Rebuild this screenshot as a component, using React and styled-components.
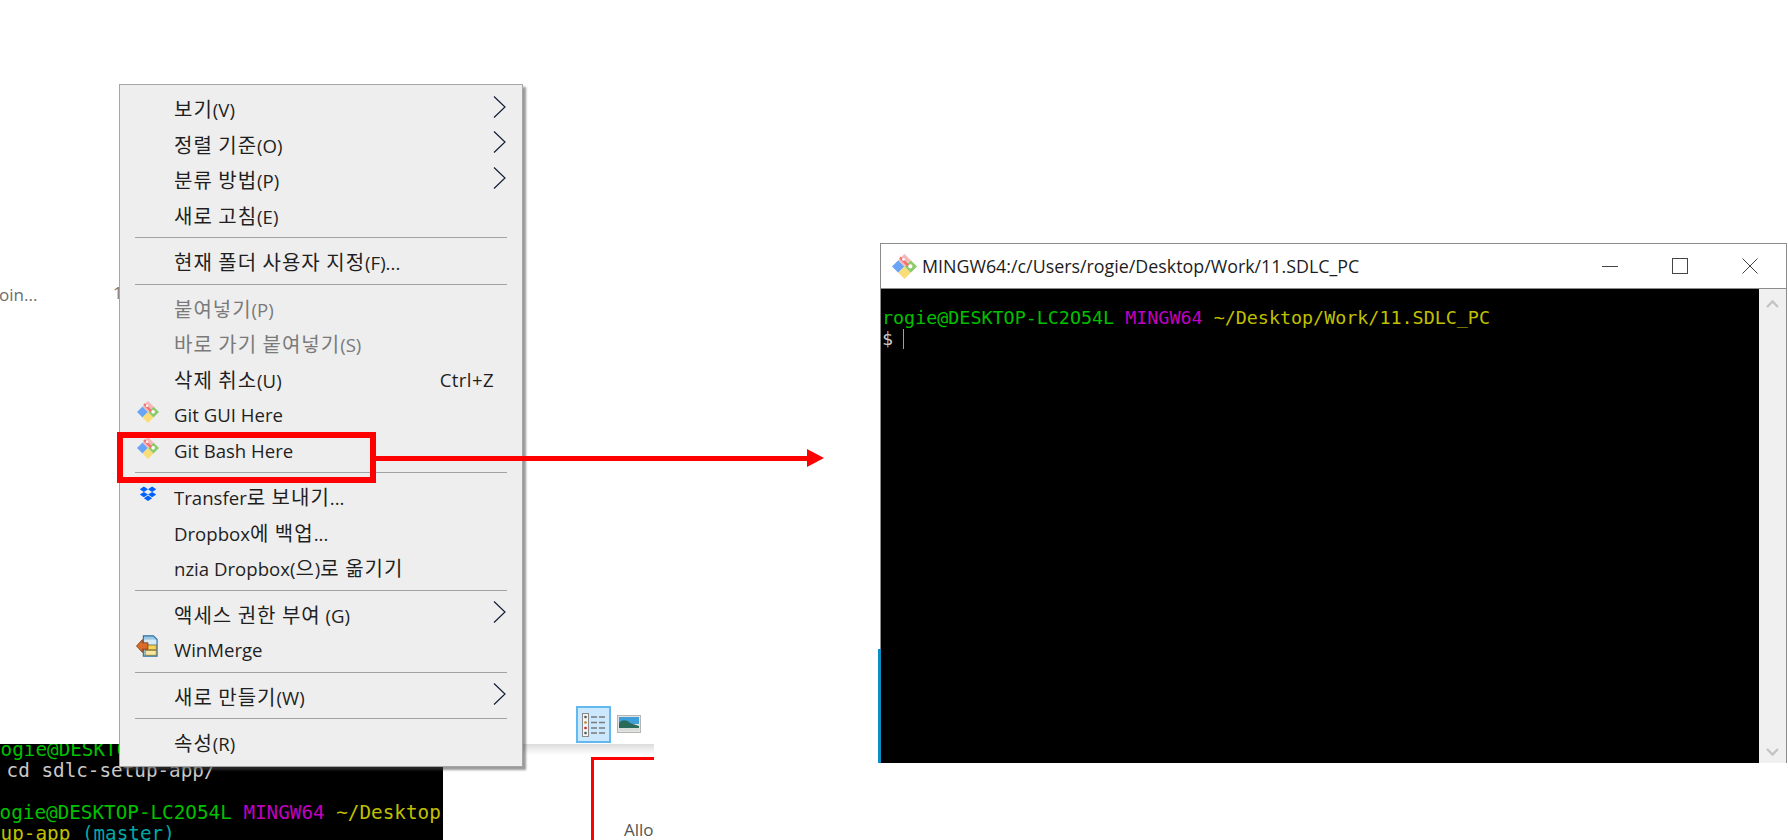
import React from "react";
import styled, { createGlobalStyle } from "styled-components";

const UI_FONT = `"Open Sans", "Noto Sans CJK KR", sans-serif`;
const MONO_FONT = `"DejaVu Sans Mono", "Liberation Mono", monospace`;

const GlobalStyle = createGlobalStyle`
  html, body {
    margin: 0;
    padding: 0;
    background: #fff;
  }
`;

const Page = styled.div`
  position: relative;
  display: flex;
  align-items: flex-start;
  width: 1788px;
  height: 840px;
  overflow: hidden;
  background: #fff;
`;

const Collage = styled.div`
  position: relative;
  width: 654px;
  height: 840px;
  flex: none;
  overflow: hidden;
  padding: 84px 0 0 119px;
  box-sizing: border-box;
  font-family: ${UI_FONT};
`;

/* pieces of other screenshots showing behind the menu */
const BehindText = styled.span`
  position: absolute;
  left: ${(p) => p.$left}px;
  top: ${(p) => p.$top}px;
  font-size: 17px;
  line-height: 24px;
  color: ${(p) => p.$color || "#6d6d6d"};
`;

const BehindTerminal = styled.div`
  position: absolute;
  left: 0;
  top: 744px;
  width: 443px;
  height: 96px;
  background: #000;
  color: #c8c8c8;
  font-family: ${MONO_FONT};
  font-size: 19.3px;
  line-height: 21px;
  white-space: pre;
  overflow: hidden;
`;

const TermLine = styled.div`
  height: 21px;
  margin-left: ${(p) => p.$shift || 0}px;
  transform: translateY(-5px);
`;

const Tone = styled.span`
  color: ${(p) => p.$c};
`;

const ShadeBand = styled.div`
  position: absolute;
  left: 443px;
  right: 0;
  top: 744px;
  height: 11px;
  background: linear-gradient(#dcdcdc, #ffffff);
`;

const ViewButton = styled.div`
  position: absolute;
  left: 576px;
  top: 706px;
  width: 35px;
  height: 37px;
  box-sizing: border-box;
  display: flex;
  align-items: center;
  justify-content: center;
  background: #cce8ff;
  border: 2px solid #62b9ee;
`;

const ViewIcon = styled.div`
  position: absolute;
  left: 617px;
  top: 715px;
  width: 24px;
  height: 18px;
`;

const PreviewBox = styled.div`
  position: absolute;
  left: 591px;
  top: 757px;
  width: 120px;
  height: 120px;
  box-sizing: border-box;
  border: 3px solid #ff0000;
  background: #fff;
  padding: 58px 0 0 30px;
  color: #555;
  font-size: 17px;
  line-height: 24px;
`;

const Menu = styled.div`
  position: relative;
  z-index: 2;
  width: 404px;
  height: 683px;
  box-sizing: border-box;
  padding-top: 6px;
  background: #eeeeee;
  border: 1px solid #a6a6a6;
  box-shadow: 3px 3px 2px rgba(70, 70, 70, 0.55);
`;

const Row = styled.div`
  position: relative;
  display: flex;
  align-items: center;
  height: 35.5px;
  padding: 0 16px 0 54px;
  font-size: 18.6px;
  color: ${(p) => (p.$disabled ? "#7a7a7a" : "#1f1f1f")};
  white-space: nowrap;
`;

const Hangul = styled.span`
  font-family: "Noto Sans CJK KR", sans-serif;
  font-size: 20px;
  letter-spacing: 1px;
`;

const Shortcut = styled.span`
  margin-left: auto;
  padding-right: 12px;
  letter-spacing: 0.4px;
`;

const Chevron = styled.svg`
  margin-left: auto;
  width: 13px;
  height: 24px;
  transform: translateY(-2px);
`;

const RowIcon = styled.svg`
  position: absolute;
  left: ${(p) => p.$left}px;
  top: ${(p) => p.$top}px;
  width: ${(p) => p.$size}px;
  height: ${(p) => p.$size}px;
`;

const Separator = styled.div`
  height: 1px;
  margin: 4px 15px 6px;
  background: #a3a3a3;
`;

const Callout = styled.div`
  position: absolute;
  z-index: 3;
  left: 117px;
  top: 432px;
  display: flex;
  align-items: center;
`;

const CalloutBox = styled.div`
  width: 259px;
  height: 51px;
  box-sizing: border-box;
  border: 6px solid #ff0000;
`;

const CalloutLine = styled.div`
  width: 431px;
  height: 5px;
  background: #ff0000;
  margin-top: 1px;
`;

const CalloutHead = styled.div`
  width: 0;
  height: 0;
  margin-top: 1px;
  border-left: 17px solid #ff0000;
  border-top: 9px solid transparent;
  border-bottom: 9px solid transparent;
`;

const Terminal = styled.div`
  position: relative;
  flex: none;
  margin: 243px 0 0 226px;
  width: 907px;
  height: 520px;
  box-sizing: border-box;
  display: flex;
  flex-direction: column;
  border: 1px solid #8c8c8c;
  border-bottom: 0;
  background: #fff;
`;

const BlueEdge = styled.div`
  position: absolute;
  left: -3px;
  bottom: 0;
  width: 3px;
  height: 114px;
  background: #0a8fc4;
`;

const TitleBar = styled.div`
  display: flex;
  align-items: center;
  height: 45px;
  flex: none;
  padding-left: 11px;
  box-sizing: border-box;
  border-bottom: 1px solid #8c8c8c;
  font-family: ${UI_FONT};
  font-size: 17.85px;
  color: #1c1c1c;
  white-space: nowrap;
`;

const TitleIcon = styled.svg`
  width: 25px;
  height: 25px;
  flex: none;
  margin-right: 5px;
`;

const WinButtons = styled.div`
  margin-left: auto;
  display: flex;
  align-items: center;
  gap: 54px;
  padding-right: 28px;
`;

const WinIcon = styled.svg`
  width: 16px;
  height: 16px;
  display: block;
`;

const TermBody = styled.div`
  flex: 1;
  display: flex;
  min-height: 0;
`;

const Screen = styled.div`
  flex: 1;
  background: #000;
  padding: 18px 0 0 1px;
  color: #c8c8c8;
  font-family: ${MONO_FONT};
  font-size: 18.37px;
  line-height: 21px;
  white-space: pre;
`;

const Prompt = styled.div`
  display: flex;
  align-items: center;
  height: 21px;
`;

const Caret = styled.span`
  display: inline-block;
  width: 1px;
  height: 20px;
  margin-left: 10px;
  background: #a0a0a0;
`;

const ScrollBar = styled.div`
  width: 27px;
  flex: none;
  display: flex;
  flex-direction: column;
  justify-content: space-between;
  align-items: center;
  padding: 10px 0 6px;
  box-sizing: border-box;
  background: #f0f0f0;
`;

const ScrollArrow = styled.svg`
  width: 13px;
  height: 10px;
  display: block;
`;

function GitLogo({ icon: Icon = RowIcon, ...props }) {
  return (
    <Icon viewBox="0 0 24 24" {...props}>
      <path d="M6 6 L12 12 L6 18 L0 12 Z" fill="#6aa5f5" />
      <path d="M12 12 L18 18 L12 24 L6 18 Z" fill="#fadc78" />
      <path d="M18 6 L24 12 L18 18 L12 12 Z" fill="#8ccb6b" />
      <path d="M12 0 L18 6 L12 12 L6 6 Z" fill="#f6b6b6" />
      <path d="M8.5 2.5 L17 11 L15.4 12.6 L6.9 4.1 Z" fill="#f26d6d" />
      <circle cx="17.6" cy="11.8" r="2" fill="#fff" />
      <circle cx="11" cy="5.2" r="1.4" fill="#fff" />
    </Icon>
  );
}

function DropboxLogo(props) {
  return (
    <RowIcon viewBox="0 0 24 24" {...props}>
      <path
        d="M6.5 2 L12 5.6 L6.5 9.2 L1 5.6 Z M17.5 2 L23 5.6 L17.5 9.2 L12 5.6 Z M1 12.8 L6.5 9.2 L12 12.8 L6.5 16.4 Z M17.5 9.2 L23 12.8 L17.5 16.4 L12 12.8 Z M6.5 17.6 L12 14 L17.5 17.6 L12 21.2 Z"
        fill="#0061fe"
      />
    </RowIcon>
  );
}

function WinMergeLogo(props) {
  return (
    <RowIcon viewBox="0 0 24 24" {...props}>
      <path d="M8 1 H19 L23 5 V23 H8 Z" fill="#9cc6e6" stroke="#2b6f9f" strokeWidth="1.2" />
      <rect x="9" y="5" width="13" height="5" fill="#d7e9f6" />
      <rect x="10" y="11" width="12" height="5" fill="#f6d25a" stroke="#8f6d10" strokeWidth="0.7" />
      <rect x="10" y="17" width="12" height="5" fill="#f9e7a0" stroke="#8f6d10" strokeWidth="0.7" />
      <path d="M0.5 12 L7 5 V8.5 H13 V15.5 H7 V19 Z" fill="#dc6a28" stroke="#74320e" strokeWidth="0.8" />
    </RowIcon>
  );
}

function Arrow() {
  return (
    <Chevron viewBox="0 0 13 24">
      <path d="M1 1.5 L12 12 L1 22.5" fill="none" stroke="#14203a" strokeWidth="1.2" />
    </Chevron>
  );
}

// hangul runs are set larger than the latin text, as Malgun Gothic is on the original
function splitHangul(label) {
  return label.split(/([가-힣]+(?: [가-힣]+)*)/).map((part, i) =>
    i % 2 === 1 ? <Hangul key={i}>{part}</Hangul> : part
  );
}

function MenuRow({ label, arrow, shortcut, disabled, icon }) {
  return (
    <Row $disabled={disabled}>
      {icon}
      <span>{splitHangul(label)}</span>
      {shortcut && <Shortcut>{shortcut}</Shortcut>}
      {arrow && <Arrow />}
    </Row>
  );
}

export default function App() {
  return (
    <Page>
      <GlobalStyle />
      <Collage>
        <BehindText $left={-1} $top={283}>
          oin...
        </BehindText>
        <BehindText $left={113} $top={281} $color="#8a7a5a">
          1
        </BehindText>
        <BehindTerminal>
          <TermLine $shift={-11}>
            <Tone $c="#00c000">rogie@DESKTOP</Tone>
          </TermLine>
          <TermLine $shift={-5}> cd sdlc-setup-app/</TermLine>
          <TermLine />
          <TermLine $shift={-12}>
            <Tone $c="#00c000">rogie@DESKTOP-LC2O54L</Tone> <Tone $c="#c000c0">MINGW64</Tone>{" "}
            <Tone $c="#c0c000">~/Desktop</Tone>
          </TermLine>
          <TermLine $shift={-11}>
            <Tone $c="#c0c000">tup-app</Tone> <Tone $c="#00a8a8">(master)</Tone>
          </TermLine>
        </BehindTerminal>
        <ShadeBand />
        <ViewButton>
          <svg width="24" height="24" viewBox="0 0 24 24">
            <rect x="0.5" y="0.5" width="6" height="23" fill="#f4f4f4" stroke="#8a8a8a" />
            <circle cx="3.5" cy="4" r="1.3" fill="#555" />
            <circle cx="3.5" cy="9.5" r="1.3" fill="#a88a20" />
            <circle cx="3.5" cy="15" r="1.3" fill="#c22" />
            <circle cx="3.5" cy="20" r="1.3" fill="#555" />
            <path d="M9 4h6M17 4h6M9 9.5h6M17 9.5h6M9 15h6M17 15h6M9 20h6M17 20h6" stroke="#7a7a7a" strokeWidth="1.6" />
          </svg>
        </ViewButton>
        <ViewIcon>
          <svg width="24" height="18" viewBox="0 0 24 18">
            <rect x="0.5" y="0.5" width="23" height="17" fill="#e4e4e4" stroke="#b4b4b4" />
            <rect x="2" y="2" width="20" height="7" fill="#3f9fd8" />
            <path d="M2 8 C6 4 10 5 13 8 L22 11 V14 H2 Z" fill="#2a6a58" />
            <rect x="2" y="13" width="20" height="3" fill="#d8dcd8" />
          </svg>
        </ViewIcon>
        <PreviewBox>Allow</PreviewBox>
        <Menu>
          <MenuRow label="보기(V)" arrow />
          <MenuRow label="정렬 기준(O)" arrow />
          <MenuRow label="분류 방법(P)" arrow />
          <MenuRow label="새로 고침(E)" />
          <Separator />
          <MenuRow label="현재 폴더 사용자 지정(F)..." />
          <Separator />
          <MenuRow label="붙여넣기(P)" disabled />
          <MenuRow label="바로 가기 붙여넣기(S)" disabled />
          <MenuRow label="삭제 취소(U)" shortcut="Ctrl+Z" />
          <MenuRow label="Git GUI Here" icon={<GitLogo $left={17} $top={4} $size={22} />} />
          <MenuRow label="Git Bash Here" icon={<GitLogo $left={17} $top={4} $size={22} />} />
          <Separator />
          <MenuRow label="Transfer로 보내기..." icon={<DropboxLogo $left={19} $top={6} $size={18} />} />
          <MenuRow label="Dropbox에 백업..." />
          <MenuRow label="nzia Dropbox(으)로 옮기기" />
          <Separator />
          <MenuRow label="액세스 권한 부여 (G)" arrow />
          <MenuRow label="WinMerge" icon={<WinMergeLogo $left={16} $top={3} $size={22} />} />
          <Separator />
          <MenuRow label="새로 만들기(W)" arrow />
          <Separator />
          <MenuRow label="속성(R)" />
        </Menu>
      </Collage>
      <Callout>
        <CalloutBox />
        <CalloutLine />
        <CalloutHead />
      </Callout>
      <Terminal>
        <BlueEdge />
        <TitleBar>
          <GitLogo icon={TitleIcon} />
          MINGW64:/c/Users/rogie/Desktop/Work/11.SDLC_PC
          <WinButtons>
            <WinIcon viewBox="0 0 16 16">
              <path d="M0 8.5 H16" stroke="#444" strokeWidth="1" />
            </WinIcon>
            <WinIcon viewBox="0 0 16 16">
              <rect x="0.5" y="0.5" width="15" height="15" fill="none" stroke="#444" />
            </WinIcon>
            <WinIcon viewBox="0 0 16 16">
              <path d="M0.5 0.5 L15.5 15.5 M15.5 0.5 L0.5 15.5" stroke="#444" strokeWidth="1" />
            </WinIcon>
          </WinButtons>
        </TitleBar>
        <TermBody>
          <Screen>
            <div>
              <Tone $c="#00c000">rogie@DESKTOP-LC2O54L</Tone> <Tone $c="#c000c0">MINGW64</Tone>{" "}
              <Tone $c="#c0c000">~/Desktop/Work/11.SDLC_PC</Tone>
            </div>
            <Prompt>
              $<Caret />
            </Prompt>
          </Screen>
          <ScrollBar>
            <ScrollArrow viewBox="0 0 13 10">
              <path d="M1 8 L6.5 2.5 L12 8" fill="none" stroke="#c4c4c4" strokeWidth="2.4" />
            </ScrollArrow>
            <ScrollArrow viewBox="0 0 13 10">
              <path d="M1 2 L6.5 7.5 L12 2" fill="none" stroke="#c4c4c4" strokeWidth="2.4" />
            </ScrollArrow>
          </ScrollBar>
        </TermBody>
      </Terminal>
    </Page>
  );
}
